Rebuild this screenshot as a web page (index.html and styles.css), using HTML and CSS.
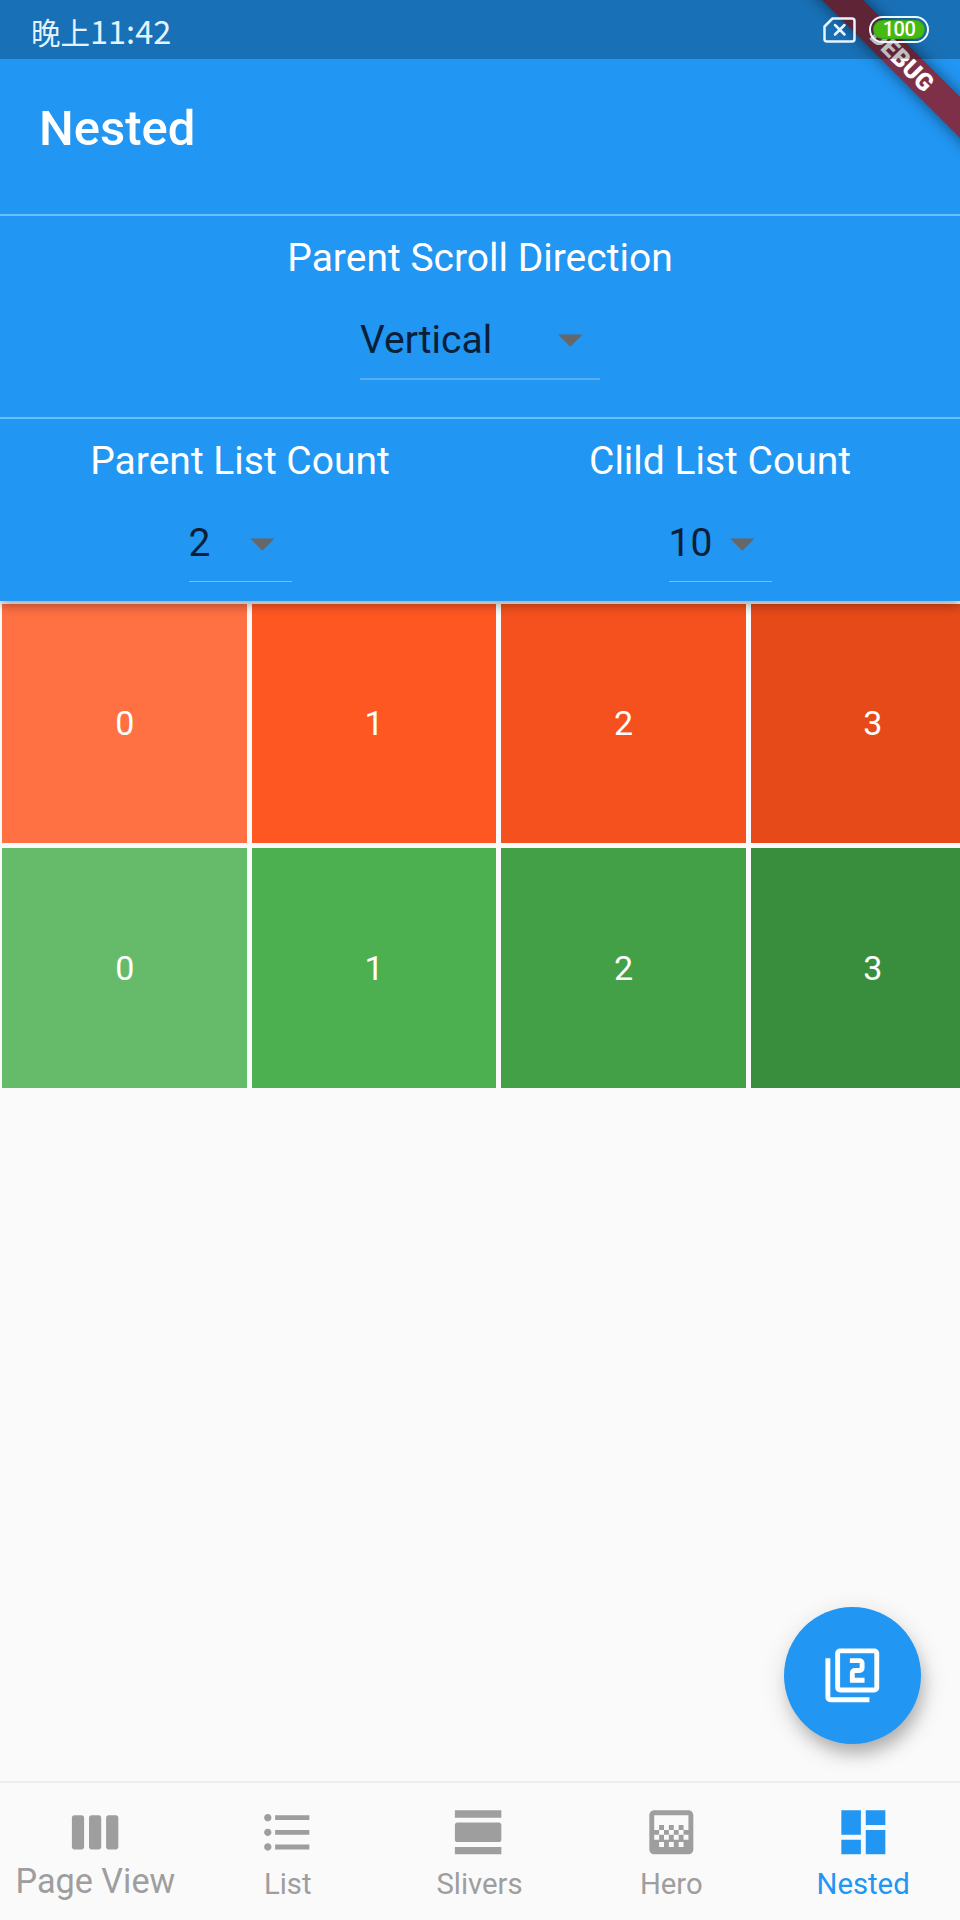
FILE: index.html
```html
<!DOCTYPE html>
<html lang="en">
<head>
<meta charset="utf-8">
<title>Nested</title>
<link rel="stylesheet" href="styles.css">
</head>
<body>
<div class="screen">
  <header class="app-bar">
    <h1 class="title">Nested</h1>
    <section class="panel">
      <div class="field">
        <div class="label">Parent Scroll Direction</div>
        <div class="select wide"><span>Vertical</span><svg class="icon" viewBox="0 0 24 24"><path d="M7 10l5 5 5-5z"/></svg></div>
      </div>
    </section>
    <section class="panel counts">
      <div class="field">
        <div class="label">Parent List Count</div>
        <div class="select"><span>2</span><svg class="icon" viewBox="0 0 24 24"><path d="M7 10l5 5 5-5z"/></svg></div>
      </div>
      <div class="field">
        <div class="label">Clild List Count</div>
        <div class="select"><span>10</span><svg class="icon" viewBox="0 0 24 24"><path d="M7 10l5 5 5-5z"/></svg></div>
      </div>
    </section>
  </header>

  <main class="lists">
    <div class="row">
      <div class="cell orange-400">0</div><div class="cell orange-500">1</div><div class="cell orange-600">2</div><div class="cell orange-700">3</div>
    </div>
    <div class="row">
      <div class="cell green-400">0</div><div class="cell green-500">1</div><div class="cell green-600">2</div><div class="cell green-700">3</div>
    </div>
  </main>

  <nav class="tabs">
    <div class="tab first"><svg class="icon" viewBox="0 0 24 24"><path d="M6 5H3c-.55 0-1 .45-1 1v12c0 .55.45 1 1 1h3c.55 0 1-.45 1-1V6c0-.55-.45-1-1-1zm14 0h-3c-.55 0-1 .45-1 1v12c0 .55.45 1 1 1h3c.55 0 1-.45 1-1V6c0-.55-.45-1-1-1zm-7 0h-3c-.55 0-1 .45-1 1v12c0 .55.45 1 1 1h3c.55 0 1-.45 1-1V6c0-.55-.45-1-1-1z"/></svg><span>Page View</span></div>
    <div class="tab"><svg class="icon" viewBox="0 0 24 24"><path d="M4 10.5c-.83 0-1.5.67-1.5 1.5s.67 1.5 1.5 1.5 1.5-.67 1.5-1.5-.67-1.5-1.5-1.5zm0-6c-.83 0-1.5.67-1.5 1.5S3.17 7.5 4 7.5 5.5 6.83 5.5 6 4.83 4.5 4 4.5zm0 12c-.83 0-1.5.68-1.5 1.5s.68 1.5 1.5 1.5 1.5-.68 1.5-1.5-.67-1.5-1.5-1.5zM7 19h14v-2H7v2zm0-6h14v-2H7v2zm0-8v2h14V5H7z"/></svg><span>List</span></div>
    <div class="tab"><svg class="icon" viewBox="0 0 24 24"><path d="M2 21h19v-3H2v3zM20 8H3c-.55 0-1 .45-1 1v6c0 .55.45 1 1 1h17c.55 0 1-.45 1-1V9c0-.55-.45-1-1-1zM2 3v3h19V3H2z"/></svg><span>Slivers</span></div>
    <div class="tab"><svg class="icon" viewBox="0 0 24 24"><path d="M11 9h2v2h-2zm-2 2h2v2H9zm4 0h2v2h-2zm2-2h2v2h-2zM7 9h2v2H7zm12-6H5c-1.1 0-2 .9-2 2v14c0 1.1.9 2 2 2h14c1.1 0 2-.9 2-2V5c0-1.1-.9-2-2-2zM9 18H7v-2h2v2zm4 0h-2v-2h2v2zm4 0h-2v-2h2v2zm2-7h-2v2h2v2h-2v-2h-2v2h-2v-2h-2v2H9v-2H7v2H5v-2h2v-2H5V5h14v6z"/></svg><span>Hero</span></div>
    <div class="tab active"><svg class="icon" viewBox="0 0 24 24"><path d="M3 13h8V3H3v10zm0 8h8v-6H3v6zm10 0h8V11h-8v10zm0-18v6h8V3h-8z"/></svg><span>Nested</span></div>
  </nav>

  <div class="fab"><svg class="icon" viewBox="0 0 24 24"><path d="M3 5H1v16c0 1.1.9 2 2 2h16v-2H3V5zm18-4H7c-1.1 0-2 .9-2 2v14c0 1.1.9 2 2 2h14c1.1 0 2-.9 2-2V3c0-1.1-.9-2-2-2zm0 16H7V3h14v14zm-4-4h-4v-2h2c1.1 0 2-.89 2-2V7c0-1.11-.9-2-2-2h-4v2h4v2h-2c-1.1 0-2 .89-2 2v4h6v-2z"/></svg></div>

  <div class="ribbon"><div class="ribbon-band">DEBUG</div></div>

  <div class="status-bar">
    <div class="clock"><span class="period">晚上</span><span class="time">11:42</span></div>
    <div class="status-icons">
      <svg width="33" height="26" viewBox="0 0 33 26"><path d="M9.5 1.5H29a2.5 2.5 0 0 1 2.5 2.5v18a2.5 2.5 0 0 1-2.5 2.5H4A2.5 2.5 0 0 1 1.500 22V9.500z M12 8l9.500 9.500 M21.500 8L12 17.500"/></svg>
      <div class="battery">100</div>
    </div>
  </div>
</div>
</body>
</html>
```
FILE: styles.css
```css
* { box-sizing: border-box; }
body { margin: 0; font-family: Roboto, "Noto Sans CJK SC", sans-serif; background: #fafafa; }
.screen { position: relative; display: flex; flex-direction: column; width: 960px; height: 1920px; overflow: hidden; background: #fafafa; }
.icon { display: block; flex: none; width: 58.66px; height: 58.66px; fill: currentColor; }

.app-bar { position: relative; z-index: 1; height: 601px; flex: none; padding-top: 59px; background: #2196f3; color: #fff; box-shadow: 0 5px 10px rgba(0,0,0,.24), 0 2px 12px rgba(0,0,0,.14); }
.title { margin: 0; height: 155px; padding-left: 39px; font-size: 49px; line-height: 140px; font-weight: 500; }
.panel { display: flex; height: 203px; padding-top: 19px; border-top: 2px solid #64c1fc; }
.counts { height: 184px; padding-top: 19px; }
.field { flex: 1; display: flex; flex-direction: column; align-items: center; gap: 29px; }
.counts .field { gap: 30px; }
.label { font-size: 39px; line-height: 46px; }
.select { display: flex; justify-content: space-between; width: 103px; height: 68px; border-bottom: 1px solid #7cbcf1; font-size: 39px; line-height: 59px; color: #0b1f38; }
.select.wide { width: 240px; height: 70px; border-bottom: 2px solid #58aef5; line-height: 60px; }
.select .icon { color: #656769; }

.lists { flex: 1; overflow: hidden; }
.row { display: flex; height: 244.5px; }
.cell { flex: none; display: flex; align-items: center; justify-content: center; width: 244.5px; margin: 2.5px 2.45px; color: #fff; font-size: 34px; }
.orange-400 { background: #ff7043; }
.orange-500 { background: #ff5722; }
.orange-600 { background: #f4511e; }
.orange-700 { background: #e64a19; }
.green-400 { background: #66bb6a; }
.green-500 { background: #4caf50; }
.green-600 { background: #43a047; }
.green-700 { background: #388e3c; }

.tabs { display: flex; flex: none; height: 139px; padding-right: 1px; border-top: 2px solid #eee; background: #fafafa; color: #9e9e9e; }
.tab { flex: 1; display: flex; flex-direction: column; align-items: center; padding-top: 19.5px; font-size: 29.3px; line-height: 40px; }
.tab span { margin-top: 3px; }
.tab.first span { margin-top: 0; margin-right: 1px; font-size: 34.2px; }
.tab.active { color: #2196f3; }

.fab { position: absolute; z-index: 2; right: 39px; bottom: 176px; display: flex; align-items: center; justify-content: center; width: 137px; height: 137px; border-radius: 50%; background: #2196f3; color: #fff; box-shadow: 4px 12px 16px -3px rgba(0,0,0,.2), 2px 8px 26px rgba(0,0,0,.16); }

.ribbon { position: absolute; z-index: 3; top: 0; right: 0; width: 180px; height: 180px; overflow: hidden; }
.ribbon-band { position: absolute; left: -28px; top: 45px; width: 300px; height: 29.3px; transform: rotate(45deg); text-align: center; font-size: 24.5px; line-height: 29px; font-weight: 900; color: #fff; background: #7f3049; box-shadow: 0 0 15px rgba(0,0,0,.5); }

.status-bar { position: absolute; z-index: 4; top: 0; left: 0; display: flex; align-items: center; justify-content: space-between; width: 100%; height: 59px; padding: 0 31px; background: rgba(0,0,0,.25); color: #e4f3fd; }
.clock { display: flex; align-items: baseline; height: 45px; line-height: 45px; font-family: "Noto Sans CJK SC", sans-serif; }
.period { font-size: 29.5px; }
.time { font-size: 32.5px; }
.status-icons { display: flex; align-items: center; gap: 13px; }
.status-icons svg { fill: none; stroke: #e8f4fd; stroke-width: 2.5; stroke-linejoin: round; stroke-linecap: round; }
.battery { width: 60px; height: 27px; border: 2.5px solid #eef8ff; border-radius: 14px; background: #46b912; background-clip: content-box; padding: 2px; box-shadow: inset 0 0 0 3px rgba(0,60,70,.15); color: #fff; font-size: 20px; line-height: 19px; font-weight: 500; text-align: center; letter-spacing: -.5px; }
```
